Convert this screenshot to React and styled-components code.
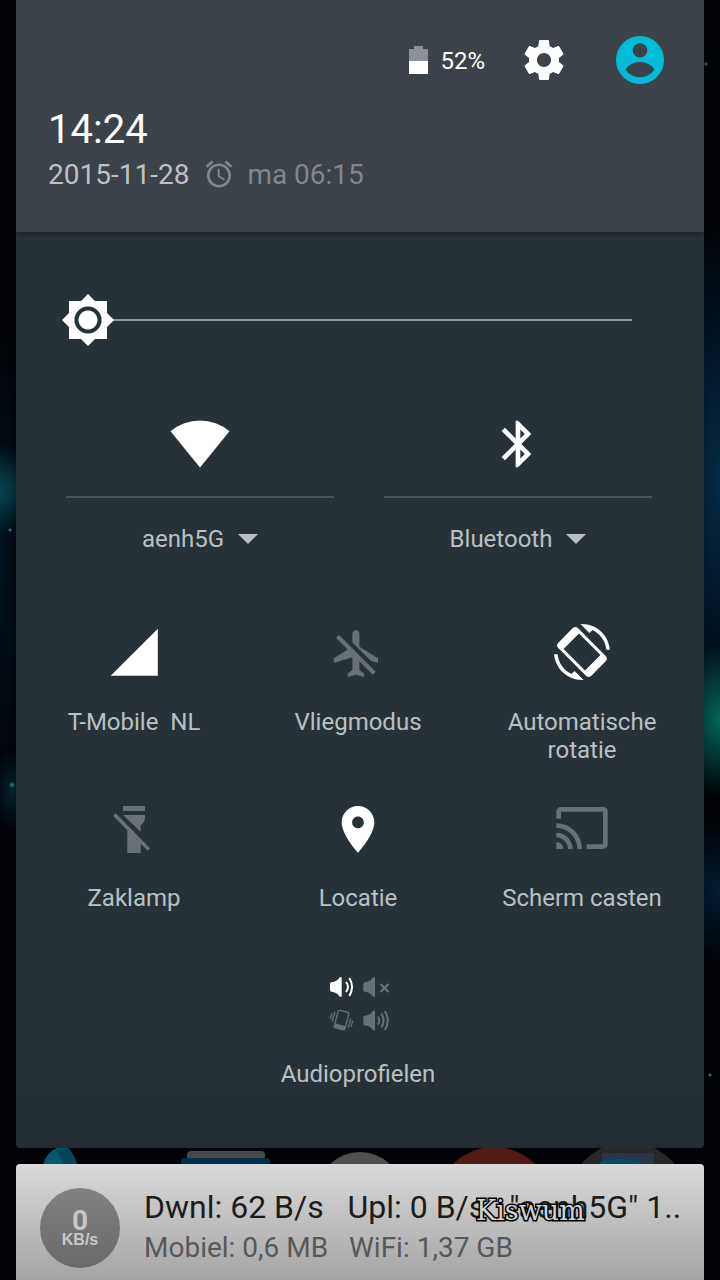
import React, { useState } from 'react';
import styled, { createGlobalStyle } from 'styled-components';

const GlobalStyle = createGlobalStyle`
  * {
    box-sizing: border-box;
  }

  body {
    margin: 0;
    background: #000206;
    font-family: Roboto, 'Liberation Sans', sans-serif;
  }

  button {
    padding: 0;
    border: none;
    background: none;
    color: inherit;
    font: inherit;
    cursor: pointer;
  }

  svg {
    display: block;
  }
`;

const Wallpaper = styled.div`
  display: flex;
  flex-direction: column;
  min-height: 100vh;
  padding: 0 16px;
  background:
    radial-gradient(circle at 12px 785px, #1c7a66 1px, transparent 3px),
    radial-gradient(circle at 10px 530px, #2a6a74 1px, transparent 2px),
    radial-gradient(circle at calc(100% - 14px) 64px, #1c6a50 1px, transparent 2px),
    radial-gradient(circle at calc(100% - 10px) 1075px, #2a6a74 1px, transparent 2px),
    radial-gradient(36px 46px at 0 490px, #05454f, transparent),
    radial-gradient(20px 40px at 12px 790px, #05222c, transparent),
    radial-gradient(24px 240px at 0 560px, #021420, transparent),
    radial-gradient(50px 76px at 100% 720px, #04665a, transparent),
    radial-gradient(60px 70px at 100% 890px, #041c32, transparent),
    radial-gradient(60px 260px at 100% 480px, #052a48, transparent),
    #000206;
`;

const Shade = styled.main`
  border-radius: 0 0 4px 4px;
  background: linear-gradient(to top, #222c32, #273238 80px);
  color: #bbc0c2;
`;

const Header = styled.header`
  position: relative;
  padding: 36px 40px 41px 32px;
  background: #3b4249;
  box-shadow: 0 2px 6px rgba(0, 0, 0, 0.4);
`;

const StatusRow = styled.div`
  display: flex;
  align-items: center;
  justify-content: flex-end;
  height: 48px;
  color: #fff;
`;

const Battery = styled.div`
  display: flex;
  align-items: center;
  gap: 12px;
  margin-right: 35px;
  padding-top: 2px;
  font-size: 24px;
  line-height: 28px;
`;

const SettingsButton = styled.button`
  margin-right: 48px;
`;

const UserButton = styled.button`
  color: #00bcd7;
`;

const Time = styled.div`
  margin-top: 22px;
  color: #fff;
  font-size: 40px;
  line-height: 48px;
`;

const DateRow = styled.div`
  display: flex;
  align-items: center;
  gap: 14px;
  margin-top: 5px;
  color: #bec0c3;
  font-size: 28px;
  line-height: 32px;
`;

const Alarm = styled.button`
  display: flex;
  align-items: center;
  gap: 12px;

  && {
    color: #83878c;
  }
`;

const Settings = styled.section`
  padding: 62px 10px 60px 6px;
`;

const Brightness = styled.input`
  display: block;
  width: calc(100% - 76px);
  height: 52px;
  margin: 0 36px 70px 40px;
  appearance: none;
  background: linear-gradient(#9199a0, #9199a0) center / calc(100% - 52px) 2px no-repeat;
  cursor: pointer;

  &::-webkit-slider-thumb {
    appearance: none;
    width: 52px;
    height: 52px;
    background: radial-gradient(circle, #fff 9px, #273238 10px, #273238 13px, #fff 14px);
    clip-path: polygon(
      26px 0, 33px 7px, 45px 7px, 45px 19px, 52px 26px, 45px 33px, 45px 45px, 33px 45px,
      26px 52px, 19px 45px, 7px 45px, 7px 33px, 0 26px, 7px 19px, 7px 7px, 19px 7px
    );
  }
`;

const Connections = styled.div`
  display: grid;
  grid-template-columns: 1fr 1fr;
  margin-bottom: 71px;
  padding: 0 17px 0 19px;
`;

const Connection = styled.div`
  display: flex;
  flex-direction: column;
  align-items: center;
  padding: 0 25px;
`;

const ConnectionToggle = styled.button`
  display: flex;
  justify-content: center;
  width: 100%;

  && {
    padding-bottom: 24px;
    border-bottom: 2px solid #48535a;
    color: #fff;
  }
`;

const ConnectionName = styled.button`
  display: flex;
  align-items: center;
  gap: 14px;

  && {
    margin-top: 27px;
    font-size: 24px;
    line-height: 28px;
  }
`;

const Tiles = styled.div`
  display: grid;
  grid-template-columns: repeat(3, 1fr);
  row-gap: 64px;
`;

const Tile = styled.button`
  display: flex;
  flex-direction: column;
  align-items: center;
  gap: 28px;
  height: 112px;
  grid-column: ${props => (props.$centered ? '2' : 'auto')};

  && {
    padding: 0 16px;
    font-size: 24px;
    line-height: 28px;
  }

  svg {
    flex: none;
    color: ${props => (props.$on ? '#fff' : '#687175')};
  }
`;

const Dock = styled.svg`
  width: 100%;
  height: 16px;
`;

const Notification = styled.article`
  position: relative;
  display: flex;
  flex: 1;
  gap: 24px;
  padding: 24px 20px 12px 24px;
  border-radius: 4px 4px 0 0;
  background: linear-gradient(#dadada, #a4a4a4);
  white-space: pre;
`;

const Speed = styled.div`
  display: flex;
  flex: none;
  flex-direction: column;
  align-items: center;
  width: 80px;
  height: 80px;
  padding-top: 22px;
  border-radius: 50%;
  background: linear-gradient(#818181, #696969);
  color: #c8c8c8;
  font-weight: 700;
`;

const SpeedValue = styled.span`
  font-size: 28px;
  line-height: 22px;
`;

const SpeedUnit = styled.span`
  font-family: 'Liberation Sans', sans-serif;
  font-size: 16px;
  line-height: 16px;
`;

const Message = styled.div`
  min-width: 0;
  overflow: hidden;
`;

const MessageTitle = styled.div`
  color: #1c1c1c;
  font-size: 32px;
  line-height: 38px;
`;

const MessageText = styled.div`
  margin-top: 5px;
  color: #585858;
  font-size: 28px;
  line-height: 34px;
`;

const Watermark = styled.span`
  position: absolute;
  top: 32px;
  left: 460px;
  color: #d0d0d0;
  font-family: 'DejaVu Serif', serif;
  font-size: 27px;
  line-height: 30px;
  -webkit-text-stroke: 3px #000;
  paint-order: stroke fill;
`;

const Icon = ({ size = 56, children }) => (
  <svg width={size} height={size} viewBox="0 0 24 24" fill="currentColor" aria-hidden="true">
    {children}
  </svg>
);

const BatteryIcon = () => (
  <svg width="19" height="30" viewBox="0 0 19 30" aria-hidden="true">
    <path d="M5 0h9v3h5v12H0V3h5z" fill="#8c9094" />
    <path d="M0 15h19v13H0z" fill="#fff" />
  </svg>
);

const SettingsIcon = () => (
  <Icon size={48}>
    <path d="M19.43 12.98c.04-.32.07-.64.07-.98s-.03-.66-.07-.98l2.11-1.65c.19-.15.24-.42.12-.64l-2-3.46c-.12-.22-.39-.3-.61-.22l-2.49 1c-.52-.4-1.08-.73-1.69-.98l-.38-2.65C14.46 2.18 14.25 2 14 2h-4c-.25 0-.46.18-.49.42l-.38 2.65c-.61.25-1.17.59-1.69.98l-2.49-1c-.23-.09-.49 0-.61.22l-2 3.46c-.13.22-.07.49.12.64l2.11 1.65c-.04.32-.07.65-.07.98s.03.66.07.98l-2.11 1.65c-.19.15-.24.42-.12.64l2 3.46c.12.22.39.3.61.22l2.49-1c.52.4 1.08.73 1.69.98l.38 2.65c.03.24.24.42.49.42h4c.25 0 .46-.18.49-.42l.38-2.65c.61-.25 1.17-.59 1.69-.98l2.49 1c.23.09.49 0 .61-.22l2-3.46c.12-.22.07-.49-.12-.64l-2.11-1.65zM12 15.5c-1.93 0-3.5-1.57-3.5-3.5s1.57-3.5 3.5-3.5 3.5 1.57 3.5 3.5-1.57 3.5-3.5 3.5z" />
  </Icon>
);

const UserIcon = () => (
  <svg width="48" height="48" viewBox="0 0 48 48" fill="currentColor" aria-hidden="true">
    <path
      fillRule="evenodd"
      d="M24 0a24 24 0 1 1 0 48a24 24 0 1 1 0-48zM24 7.2a7.2 7.2 0 1 0 0 14.4a7.2 7.2 0 1 0 0-14.4zM9.6 33.6C12.5 28.5 18 26 24 26s11.5 2.5 14.4 7.6C35.5 38.300 30 41.3 24 41.3s-11.5-3-14.4-7.7z"
    />
  </svg>
);

const AlarmIcon = () => (
  <Icon size={32}>
    <path
      transform="translate(0 -.7)"
      d="M22 5.72l-4.6-3.86-1.29 1.53 4.6 3.86L22 5.72zM7.88 3.39L6.6 1.86 2 5.71l1.29 1.53 4.59-3.85zM12.5 8H11v6l4.75 2.85.75-1.23-4-2.37V8zM12 4c-4.97 0-9 4.03-9 9s4.02 9 9 9c4.97 0 9-4.03 9-9s-4.03-9-9-9zm0 16c-3.87 0-7-3.13-7-7s3.13-7 7-7 7 3.13 7 7-3.13 7-7 7z"
    />
  </Icon>
);

const WifiIcon = () => (
  <svg width="64" height="56" viewBox="0 0 64 56" fill="currentColor" aria-hidden="true">
    <path d="M32 51.5L2.5 15.3A46 46 0 0 1 61.5 15.3z" />
  </svg>
);

const BluetoothIcon = () => (
  <Icon>
    <path d="M17.71 7.71L12 2h-1v7.59L6.41 5 5 6.41 10.59 12 5 17.59 6.41 19 11 14.41V22h1l5.71-5.71-4.3-4.29 4.3-4.29zM13 5.83l1.88 1.88L13 9.59V5.83zm1.88 10.46L13 18.17v-3.76l1.88 1.88z" />
  </Icon>
);

const ArrowIcon = () => (
  <svg width="20" height="10" viewBox="0 0 20 10" fill="currentColor" aria-hidden="true">
    <path d="M0 0h20L10 10z" />
  </svg>
);

const SignalIcon = () => (
  <Icon>
    <path d="M2 22.2h20.200V2z" />
  </Icon>
);

const AirplaneOffIcon = () => (
  <Icon>
    <path
      transform="translate(-.4 .7)"
      d="M13 9V3.5c0-.83-.67-1.5-1.5-1.5S10 2.67 10 3.5v3.68l7.83 7.83L21 16v-2l-8-5zM3 5.27l4.99 4.99L2 14v2l8-2.5V19l-2 1.5V22l3.5-1 3.5 1v-1.5L13 19v-3.73L18.73 21 20 19.73 4.27 4 3 5.27z"
    />
  </Icon>
);

const RotationIcon = () => (
  <Icon>
    <path d="M16.48 2.52c3.27 1.55 5.61 4.72 5.97 8.48h1.5C23.44 4.84 18.29 0 12 0l-.66.03 3.81 3.81 1.33-1.32zM7.52 21.48C4.25 19.94 1.91 16.76 1.55 13H.05C.56 19.16 5.71 24 12 24l.66-.03-3.81-3.81-1.33 1.32z" />
    <path
      fillRule="evenodd"
      d="M10.23 1.75c-.59-.59-1.54-.59-2.12 0L1.75 8.11c-.59.59-.59 1.54 0 2.12l12.02 12.02c.59.59 1.54.59 2.12 0l6.36-6.36c.59-.59.59-1.54 0-2.12zM10.7 4.1L4.1 10.7 13.3 19.9 19.9 13.3z"
    />
  </Icon>
);

const FlashlightOffIcon = () => (
  <svg width="56" height="56" viewBox="0 0 56 56" fill="currentColor" aria-hidden="true">
    <path d="M17 6h22v5H17zM17 15h22v3c0 3-2 6-4.3 7v6.7z" />
    <path d="M9.7 13.3L44 48.3 41.7 50.7 34.7 43.7V53H21.3V30.3L7.2 16z" />
  </svg>
);

const LocationIcon = () => (
  <Icon>
    <path
      transform="translate(0 .6)"
      d="M12 2C8.13 2 5 5.13 5 9c0 5.25 7 13 7 13s7-7.75 7-13c0-3.87-3.13-7-7-7zm0 9.5c-1.38 0-2.5-1.12-2.5-2.5s1.12-2.5 2.5-2.5 2.5 1.12 2.5 2.5-1.12 2.5-2.5 2.5z"
    />
  </Icon>
);

const CastIcon = () => (
  <Icon>
    <path d="M21 3H3c-1.1 0-2 .9-2 2v3h2V5h18v14h-7v2h7c1.1 0 2-.9 2-2V5c0-1.1-.9-2-2-2zM1 18v3h3c0-1.66-1.34-3-3-3zm0-4v2c2.76 0 5 2.24 5 5h2c0-3.87-3.13-7-7-7zm0-4v2c4.97 0 9 4.03 9 9h2c0-6.08-4.93-11-11-11z" />
  </Icon>
);

const CONE = 'M4 8Q4 6.5 5.5 6.3Q11 6 13.7 1.3H15.7V20.7H13.7Q11 16 5.5 15.7Q4 15.5 4 14z';

const ProfilesIcon = () => (
  <svg width="64" height="56" viewBox="0 0 64 56" fill="none" strokeWidth="2" aria-hidden="true">
    <g fill="#fff">
      <path d={CONE} />
      <path d="M20 6q4 5 0 10M23.3 2q5.5 9 0 18" fill="none" stroke="#fff" />
    </g>
    <g fill="#687175">
      <path d={CONE} transform="translate(33.3 0)" />
      <path d={CONE} transform="translate(33.3 33.5)" />
    </g>
    <g stroke="#687175">
      <path d="M54.5 8l8 8M62.5 8l-8 8" strokeWidth="2.4" />
      <path d="M52 40.5q2.5 4 0 8M55.300 37.5q4.500 7 0 14M58.800 35q6 9.500 0 19" />
      <g transform="rotate(15 15.5 44)" strokeWidth="1.3">
        <rect x="10" y="35" width="11" height="18" rx="2" />
        <path d="M10 49.5h11v2q0 1.500-1.500 1.500h-8q-1.500 0-1.500-1.500z" fill="#687175" />
        <path d="M7 38v10M4.500 40v6M24 40v10M26.500 42v6" />
      </g>
    </g>
  </svg>
);

const TILES = [
  { id: 'mobile', label: 'T-Mobile\u00a0 NL', icon: SignalIcon, on: true },
  { id: 'airplane', label: 'Vliegmodus', icon: AirplaneOffIcon },
  { id: 'rotation', label: 'Automatische rotatie', icon: RotationIcon, on: true },
  { id: 'flashlight', label: 'Zaklamp', icon: FlashlightOffIcon },
  { id: 'location', label: 'Locatie', icon: LocationIcon, on: true },
  { id: 'cast', label: 'Scherm casten', icon: CastIcon },
  { id: 'audio', label: 'Audioprofielen', icon: ProfilesIcon, on: true, centered: true },
];

const CONNECTIONS = [
  { name: 'aenh5G', toggle: 'Wi-Fi', icon: WifiIcon },
  { name: 'Bluetooth', toggle: 'Bluetooth', icon: BluetoothIcon },
];

const App = () => {
  const [brightness, setBrightness] = useState(0);

  return (
    <Wallpaper>
      <GlobalStyle />
      <Shade>
        <Header>
          <StatusRow>
            <Battery>
              <BatteryIcon />
              52%
            </Battery>
            <SettingsButton aria-label="Instellingen">
              <SettingsIcon />
            </SettingsButton>
            <UserButton aria-label="Gebruiker">
              <UserIcon />
            </UserButton>
          </StatusRow>
          <Time>14:24</Time>
          <DateRow>
            <span>2015-11-28</span>
            <Alarm>
              <AlarmIcon />
              ma 06:15
            </Alarm>
          </DateRow>
        </Header>

        <Settings>
          <Brightness
            type="range"
            aria-label="Helderheid"
            min="0"
            max="255"
            value={brightness}
            onChange={(e) => setBrightness(Number(e.target.value))}
          />

          <Connections>
            {CONNECTIONS.map(({ name, toggle, icon: ConnectionIcon }) => (
              <Connection key={name}>
                <ConnectionToggle aria-label={toggle}>
                  <ConnectionIcon />
                </ConnectionToggle>
                <ConnectionName>
                  {name}
                  <ArrowIcon />
                </ConnectionName>
              </Connection>
            ))}
          </Connections>

          <Tiles>
            {TILES.map(({ id, label, icon: TileIcon, on, centered }) => (
              <Tile key={id} $on={on} $centered={centered}>
                <TileIcon />
                <span>{label}</span>
              </Tile>
            ))}
          </Tiles>
        </Settings>
      </Shade>

      <Dock viewBox="0 0 688 16" aria-hidden="true">
        <path d="M27 16Q32 3 41 0h11q6 6 9 16z" fill="#07586b" />
        <path d="M52 0q6 6 9 16H48L40 2z" fill="#054656" />
        <rect x="171" y="3" width="78" height="10" rx="4" fill="#484848" />
        <rect x="165" y="10" width="89" height="10" rx="4" fill="#02304a" />
        <circle cx="344" cy="47" r="43" fill="#505050" />
        <circle cx="478" cy="57" r="58" fill="#4f1b15" />
        <circle cx="612" cy="54" r="60" fill="#272728" />
        <rect x="586" y="5" width="52" height="14" rx="2" fill="#2c3548" />
        <path d="M582 16q6-6 14-4 8-3 16 0 8-2 14 4z" fill="#064a63" />
      </Dock>

      <Notification>
        <Speed>
          <SpeedValue>0</SpeedValue>
          <SpeedUnit>KB/s</SpeedUnit>
        </Speed>
        <Message>
          <MessageTitle>{'Dwnl: 62 B/s   Upl: 0 B/s   "aenh5G" 1..'}</MessageTitle>
          <MessageText>{'Mobiel: 0,6 MB   WiFi: 1,37 GB'}</MessageText>
        </Message>
        <Watermark>Kiswum</Watermark>
      </Notification>
    </Wallpaper>
  );
};

export default App;
